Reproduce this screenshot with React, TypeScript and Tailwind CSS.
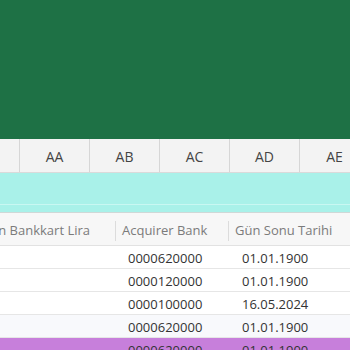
const cols = ["", "AA", "AB", "AC", "AD", "AE"];

const rows = [
  { bank: "0000620000", date: "01.01.1900", bg: "bg-white" },
  { bank: "0000120000", date: "01.01.1900", bg: "bg-white" },
  { bank: "0000100000", date: "16.05.2024", bg: "bg-white" },
  { bank: "0000620000", date: "01.01.1900", bg: "bg-[#f8f9fc]" },
  { bank: "0000620000", date: "01.01.1900", bg: "bg-[#c77fdb]" },
];

export default function App() {
  return (
    <div
      className="w-[350px] h-[350px] overflow-hidden bg-white flex flex-col"
      style={{ fontFamily: '"Open Sans", "Noto Sans", sans-serif' }}
    >
      <div className="h-[139px] shrink-0 bg-[#1e7145]" />

      {/* column letters */}
      <div className="h-[34px] shrink-0 flex bg-[#f3f3f3] border-b border-[#dadada]">
        {cols.map((c, i) => (
          <div
            key={i}
            className={`${i === 0 ? "w-[20px]" : "w-[70px]"} shrink-0 flex items-center justify-center pt-[2px] border-r border-[#d6d6d6] text-[14px] text-[#444]`}
          >
            {c}
          </div>
        ))}
      </div>

      {/* cyan band */}
      <div className="h-[40px] shrink-0 flex flex-col bg-[#a9f1e9] border-b border-[#cfd8d7]">
        <div className="h-[31px]" />
        <div className="h-px bg-[#c9f7f2]" />
      </div>

      {/* table header */}
      <div className="h-[33px] shrink-0 flex items-center pt-[4px] bg-[#f7f7f7] border-b border-[#e2e2e2] text-[13px] text-[#7b7b7b]">
        <div className="w-[115px] shrink-0 flex justify-end pr-[25px] whitespace-nowrap overflow-hidden">
          n Bankkart Lira
        </div>
        <div className="w-[113px] shrink-0 h-[20px] flex items-center border-l border-[#dcdcdc] pl-[6px] whitespace-nowrap">
          Acquirer Bank
        </div>
        <div className="flex-1 h-[20px] flex items-center border-l border-[#dcdcdc] pl-[6px] whitespace-nowrap">
          Gün Sonu Tarihi
        </div>
      </div>

      {rows.map((r, i) => (
        <div
          key={i}
          className={`h-[23px] shrink-0 flex items-center pt-[3px] border-b border-[#e6e6e6] text-[13px] text-[#333] ${r.bg}`}
        >
          <div className="w-[128px] shrink-0" />
          <div className="w-[114px] shrink-0">{r.bank}</div>
          <div className="flex-1">{r.date}</div>
        </div>
      ))}
    </div>
  );
}
